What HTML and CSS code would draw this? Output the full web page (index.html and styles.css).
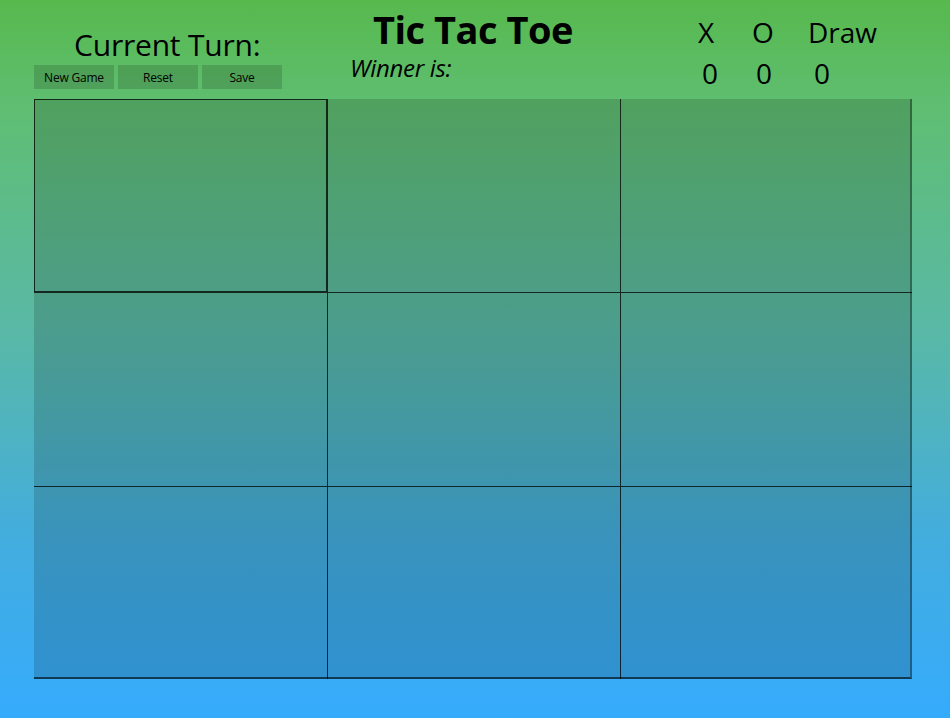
FILE: index.html
```html
<!DOCTYPE html>
<html>
<head>
<meta charset="utf-8">
<link rel="stylesheet" href="styles.css">
</head>
<body>
<div class="app">
  <header class="header">
    <div class="left">
      <div class="turn">Current Turn:</div>
      <div class="buttons">
        <button class="btn">New Game</button>
        <button class="btn">Reset</button>
        <button class="btn">Save</button>
      </div>
    </div>
    <div class="center">
      <div class="title">Tic Tac Toe</div>
      <div class="winner">Winner is:</div>
    </div>
    <div class="scores">
      <div class="s-label sx">X</div>
      <div class="s-label so">O</div>
      <div class="s-label sd">Draw</div>
      <div class="s-val sx">0</div>
      <div class="s-val so">0</div>
      <div class="s-val sd">0</div>
    </div>
  </header>
  <main class="board">
    <div class="cell first"></div>
    <div class="cell"></div>
    <div class="cell"></div>
    <div class="cell"></div>
    <div class="cell"></div>
    <div class="cell"></div>
    <div class="cell"></div>
    <div class="cell"></div>
    <div class="cell"></div>
  </main>
</div>
</body>
</html>
```
FILE: styles.css
```css
html, body {
  margin: 0;
  padding: 0;
}
body {
  width: 950px;
  height: 718px;
  overflow: hidden;
  background: linear-gradient(to bottom, #57b94d 0%, #5fbe72 15%, #5ab9a4 45%, #43adde 75%, #35abfc 100%);
  font-family: "Open Sans", "Noto Sans", sans-serif;
  color: #000;
}
.app {
  padding-left: 34px;
  width: 878px;
}
.header {
  height: 99px;
  display: flex;
}
.left {
  width: 248px;
  display: flex;
  flex-direction: column;
}
.turn {
  font-size: 30px;
  line-height: 32px;
  margin-top: 29px;
  padding-left: 40px;
  letter-spacing: -0.2px;
}
.buttons {
  display: flex;
  gap: 4px;
  margin-top: 4px;
}
.btn {
  width: 80px;
  height: 24px;
  border: none;
  padding: 0;
  background: rgba(0, 0, 0, 0.15);
  font-family: "Open Sans", "Noto Sans", sans-serif;
  font-size: 12px;
  color: #000;
  letter-spacing: -0.2px;
}
.center {
  width: 320px;
  display: flex;
  flex-direction: column;
  padding-left: 91px;
  box-sizing: border-box;
}
.title {
  font-size: 38px;
  font-weight: 700;
  line-height: 44px;
  margin-top: 7px;
  letter-spacing: -0.5px;
}
.winner {
  font-size: 24px;
  font-style: italic;
  line-height: 28px;
  margin-left: -23px;
  margin-top: 3px;
  letter-spacing: -0.3px;
}
.scores {
  display: grid;
  grid-template-columns: 54px 56px 80px;
  grid-template-rows: 38px 38px;
  padding-top: 13px;
  margin-left: 96px;
  font-size: 28px;
  line-height: 38px;
}
.s-val {
  padding-top: 3px;
}
.s-val.sx { padding-left: 4px; }
.s-val.so { padding-left: 4px; }
.s-val.sd { padding-left: 6px; }
.board {
  width: 878px;
  height: 580px;
  display: grid;
  grid-template-columns: 293px 293px 292px;
  grid-template-rows: 193px 194px 193px;
  border-right: 2px solid rgba(0, 0, 0, 0.35);
  border-bottom: 2px solid rgba(0, 0, 0, 0.6);
  box-sizing: border-box;
}
.cell {
  background: rgba(0, 0, 0, 0.15);
  border-left: 1px solid rgba(0, 0, 0, 0.75);
  border-top: 1px solid rgba(0, 0, 0, 0.75);
}
.cell:nth-child(1), .cell:nth-child(2), .cell:nth-child(3) {
  border-top: none;
}
.cell:nth-child(3n+1) {
  border-left: none;
}
.cell.first {
  border: 1px solid rgba(0, 0, 0, 0.75);
}
```
